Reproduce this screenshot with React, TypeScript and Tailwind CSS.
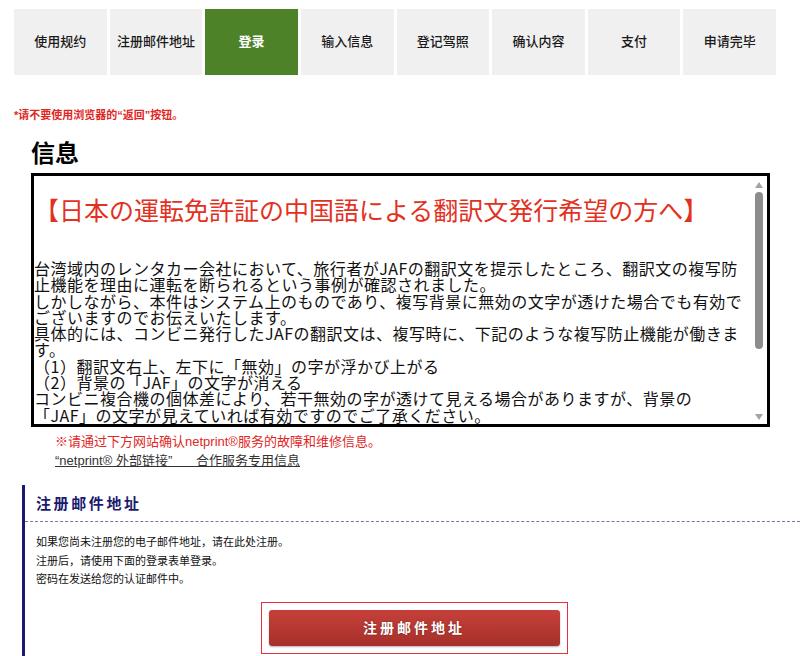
import { useState } from "react";

const steps = ["使用规约", "注册邮件地址", "登录", "输入信息", "登记驾照", "确认内容", "支付", "申请完毕"];

const infoLines = [
  "台湾域内のレンタカー会社において、旅行者がJAFの翻訳文を提示したところ、翻訳文の複写防",
  "止機能を理由に運転を断られるという事例が確認されました。",
  "しかしながら、本件はシステム上のものであり、複写背景に無効の文字が透けた場合でも有効で",
  "ございますのでお伝えいたします。",
  "具体的には、コンビニ発行したJAFの翻訳文は、複写時に、下記のような複写防止機能が働きま",
  "す。",
  "（1）翻訳文右上、左下に「無効」の字が浮かび上がる",
  "（2）背景の「JAF」の文字が消える",
  "コンビニ複合機の個体差により、若干無効の字が透けて見える場合がありますが、背景の",
  "「JAF」の文字が見えていれば有効ですのでご了承ください。",
];

const cn = { fontFamily: '"Liberation Sans", "Noto Sans CJK SC", sans-serif' };
const jp = { fontFamily: '"Noto Sans CJK JP", sans-serif' };

const App = () => {
  const [current] = useState(2);

  return (
    <div className="w-[800px] h-[656px] overflow-hidden bg-white text-black" style={cn}>
      {/* step tabs */}
      <div className="flex gap-[3px] pt-[9px] pl-[14px] w-[776px]">
        {steps.map((s, i) => (
          <div
            key={s}
            className={`flex-1 h-[66px] flex items-center justify-center text-[13px] ${
              i === current ? "bg-[#4d8229] text-white font-bold" : "bg-[#f0f0f0] text-[#1a1a1a] font-medium"
            }`}
          >
            {s}
          </div>
        ))}
      </div>

      <p className="mt-[33px] pl-[14px] text-[11px] leading-[14px] font-bold text-[#e0271f]">
        *请不要使用浏览器的“返回”按钮。
      </p>

      <h2 className="mt-[18px] pl-[31px] text-[24px] leading-[28px] font-bold">信息</h2>

      <div className="mt-[5px] ml-[31px] w-[739px] h-[254px] border-[3px] border-black flex">
        <div className="flex-1 overflow-hidden" style={jp}>
          <p className="pt-[17px] text-[25px] leading-[32px] text-[#e2321f] whitespace-nowrap">
            【日本の運転免許証の中国語による翻訳文発行希望の方へ】
          </p>
          <div className="mt-[35px] text-[16px] leading-[16.3px] tracking-[0.5px] text-[#111]">
            {infoLines.map((l, i) => (
              <div key={i} className="whitespace-nowrap">
                {l}
              </div>
            ))}
          </div>
        </div>
        <div className="w-[14px] flex flex-col items-center pt-[6px] pb-[4px] mr-[1px]">
          <svg width="8" height="6" viewBox="0 0 8 6">
            <path d="M4 0 L8 6 L0 6 Z" fill="#a3a3a3" />
          </svg>
          <div className="mt-[4px] w-[8px] h-[157px] rounded-full bg-[#8c8c8c]" />
          <div className="flex-1" />
          <svg width="8" height="6" viewBox="0 0 8 6">
            <path d="M0 0 L8 0 L4 6 Z" fill="#a3a3a3" />
          </svg>
        </div>
      </div>

      <div className="mt-[6px] pl-[55px] text-[13px]">
        <p className="leading-[18px] text-[#e0271f]">※请通过下方网站确认netprint®服务的故障和维修信息。</p>
        <p className="leading-[19px] text-[#333] underline">
          {"“netprint® 外部链接”\u3000\u00a0\u00a0 合作服务专用信息"}
        </p>
      </div>

      {/* register section */}
      <div className="mt-[15px] ml-[22px] border-l-[3px] border-[#1c1a6e] pb-[10px]">
        <h3 className="pl-[11px] pt-[10px] pb-[8px] text-[15px] leading-[18px] font-bold tracking-[2.6px] text-[#1c1a6e]">
          注册邮件地址
        </h3>
        <div className="border-t border-dashed border-[#7673ad]" />
        <div className="pl-[11px] pt-[11px] text-[11px] leading-[18.7px] text-[#111]">
          <p>如果您尚未注册您的电子邮件地址，请在此处注册。</p>
          <p>注册后，请使用下面的登录表单登录。</p>
          <p>密码在发送给您的认证邮件中。</p>
        </div>
        <div className="mt-[13px] flex justify-center pl-[3px]">
          <div className="border-[1.5px] border-[#e2323c] p-[7px]">
            <button className="w-[291px] h-[36px] rounded-[3px] bg-gradient-to-b from-[#c6403a] to-[#a6302a] text-white text-[14px] font-bold tracking-[3px] [text-shadow:0_0_2px_rgba(0,0,0,0.35)] shadow-[0_1px_2px_rgba(0,0,0,0.3)]">
              注册邮件地址
            </button>
          </div>
        </div>
      </div>
    </div>
  );
};

export default App;
